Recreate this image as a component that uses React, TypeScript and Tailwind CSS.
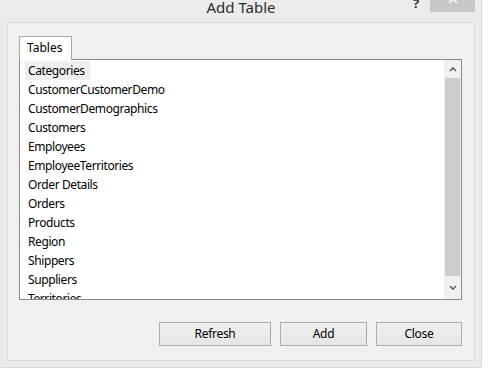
import React from "react";

const items = [
  "Categories",
  "CustomerCustomerDemo",
  "CustomerDemographics",
  "Customers",
  "Employees",
  "EmployeeTerritories",
  "Order Details",
  "Orders",
  "Products",
  "Region",
  "Shippers",
  "Suppliers",
  "Territories",
];

const font = { fontFamily: '"Segoe UI", "Noto Sans", "Open Sans", sans-serif' };

function Btn({ label, w }: { label: string; w: string }) {
  return (
    <div
      className={`${w} h-[24px] flex items-center justify-center border border-[#adadad] bg-gradient-to-b from-[#f0f0f0] to-[#e5e5e5] text-[12px] tracking-[-0.3px] text-black`}
    >
      {label}
    </div>
  );
}

export default function App() {
  return (
    <div className="w-[488px] h-[373px] bg-white relative overflow-hidden" style={font}>
      <div className="w-[482px] h-[368px] bg-[#ebebeb] border-r border-b border-[#d9d9d9] relative flex flex-col">
        {/* title bar */}
        <div className="h-[22px] flex items-start justify-center">
          <span className="text-[15px] leading-[16px] text-[#2b2b2b] -mt-[1px] ml-[1px]">Add Table</span>
        </div>
        <span className="absolute left-[413px] top-[-6px] text-[13px] font-bold text-[#333]">?</span>
        <div className="absolute left-[430px] top-0 w-[45px] h-[12px] bg-[#c7c7c7] flex items-start justify-center overflow-hidden">
          <svg width="10" height="12" viewBox="0 0 10 12" className="-mt-[6px]">
            <path d="M1 1 L9 9 M9 1 L1 9" stroke="white" strokeWidth="1.4" fill="none" />
          </svg>
        </div>
        {/* panel */}
        <div className="ml-[7px] w-[468px] h-[339px] border border-[#dadada] bg-[#f0f0f0] flex flex-col">
          <div className="mt-[13px] ml-[11px] flex">
            <div className="w-[53px] h-[24px] bg-white border border-b-0 border-[#a8a8a8] text-[12px] leading-[21px] pl-[7px] text-black -mb-px relative z-10">
              Tables
            </div>
          </div>
          <div className="ml-[11px] w-[443px] h-[241px] border border-[#8a8a8a] bg-white flex">
            <div className="flex-1 overflow-hidden pt-[1px] pl-[5px] text-[12px] tracking-[-0.4px] text-black">
              {items.map((it, i) => (
                <div key={it} className="h-[19px] leading-[19px] flex">
                  <span className={`pl-[3px] pr-[5px] ${i === 0 ? "bg-[#efefef]" : ""}`}>{it}</span>
                </div>
              ))}
            </div>
            <div className="w-[17px] bg-[#f0f0f0] flex flex-col">
              <div className="h-[18px] flex items-center justify-center">
                <svg width="8" height="6" viewBox="0 0 8 6">
                  <path d="M1 5 L4 2 L7 5" stroke="#606060" strokeWidth="1.6" fill="none" />
                </svg>
              </div>
              <div className="mx-[1px] h-[198px] bg-[#cdcdcd]" />
              <div className="flex-1 flex items-center justify-center">
                <svg width="8" height="6" viewBox="0 0 8 6">
                  <path d="M1 1 L4 4 L7 1" stroke="#606060" strokeWidth="1.6" fill="none" />
                </svg>
              </div>
            </div>
          </div>
          <div className="mt-[22px] ml-[151px] flex gap-[9px]">
            <Btn label="Refresh" w="w-[112px]" />
            <Btn label="Add" w="w-[87px]" />
            <Btn label="Close" w="w-[86px]" />
          </div>
        </div>
      </div>
    </div>
  );
}
